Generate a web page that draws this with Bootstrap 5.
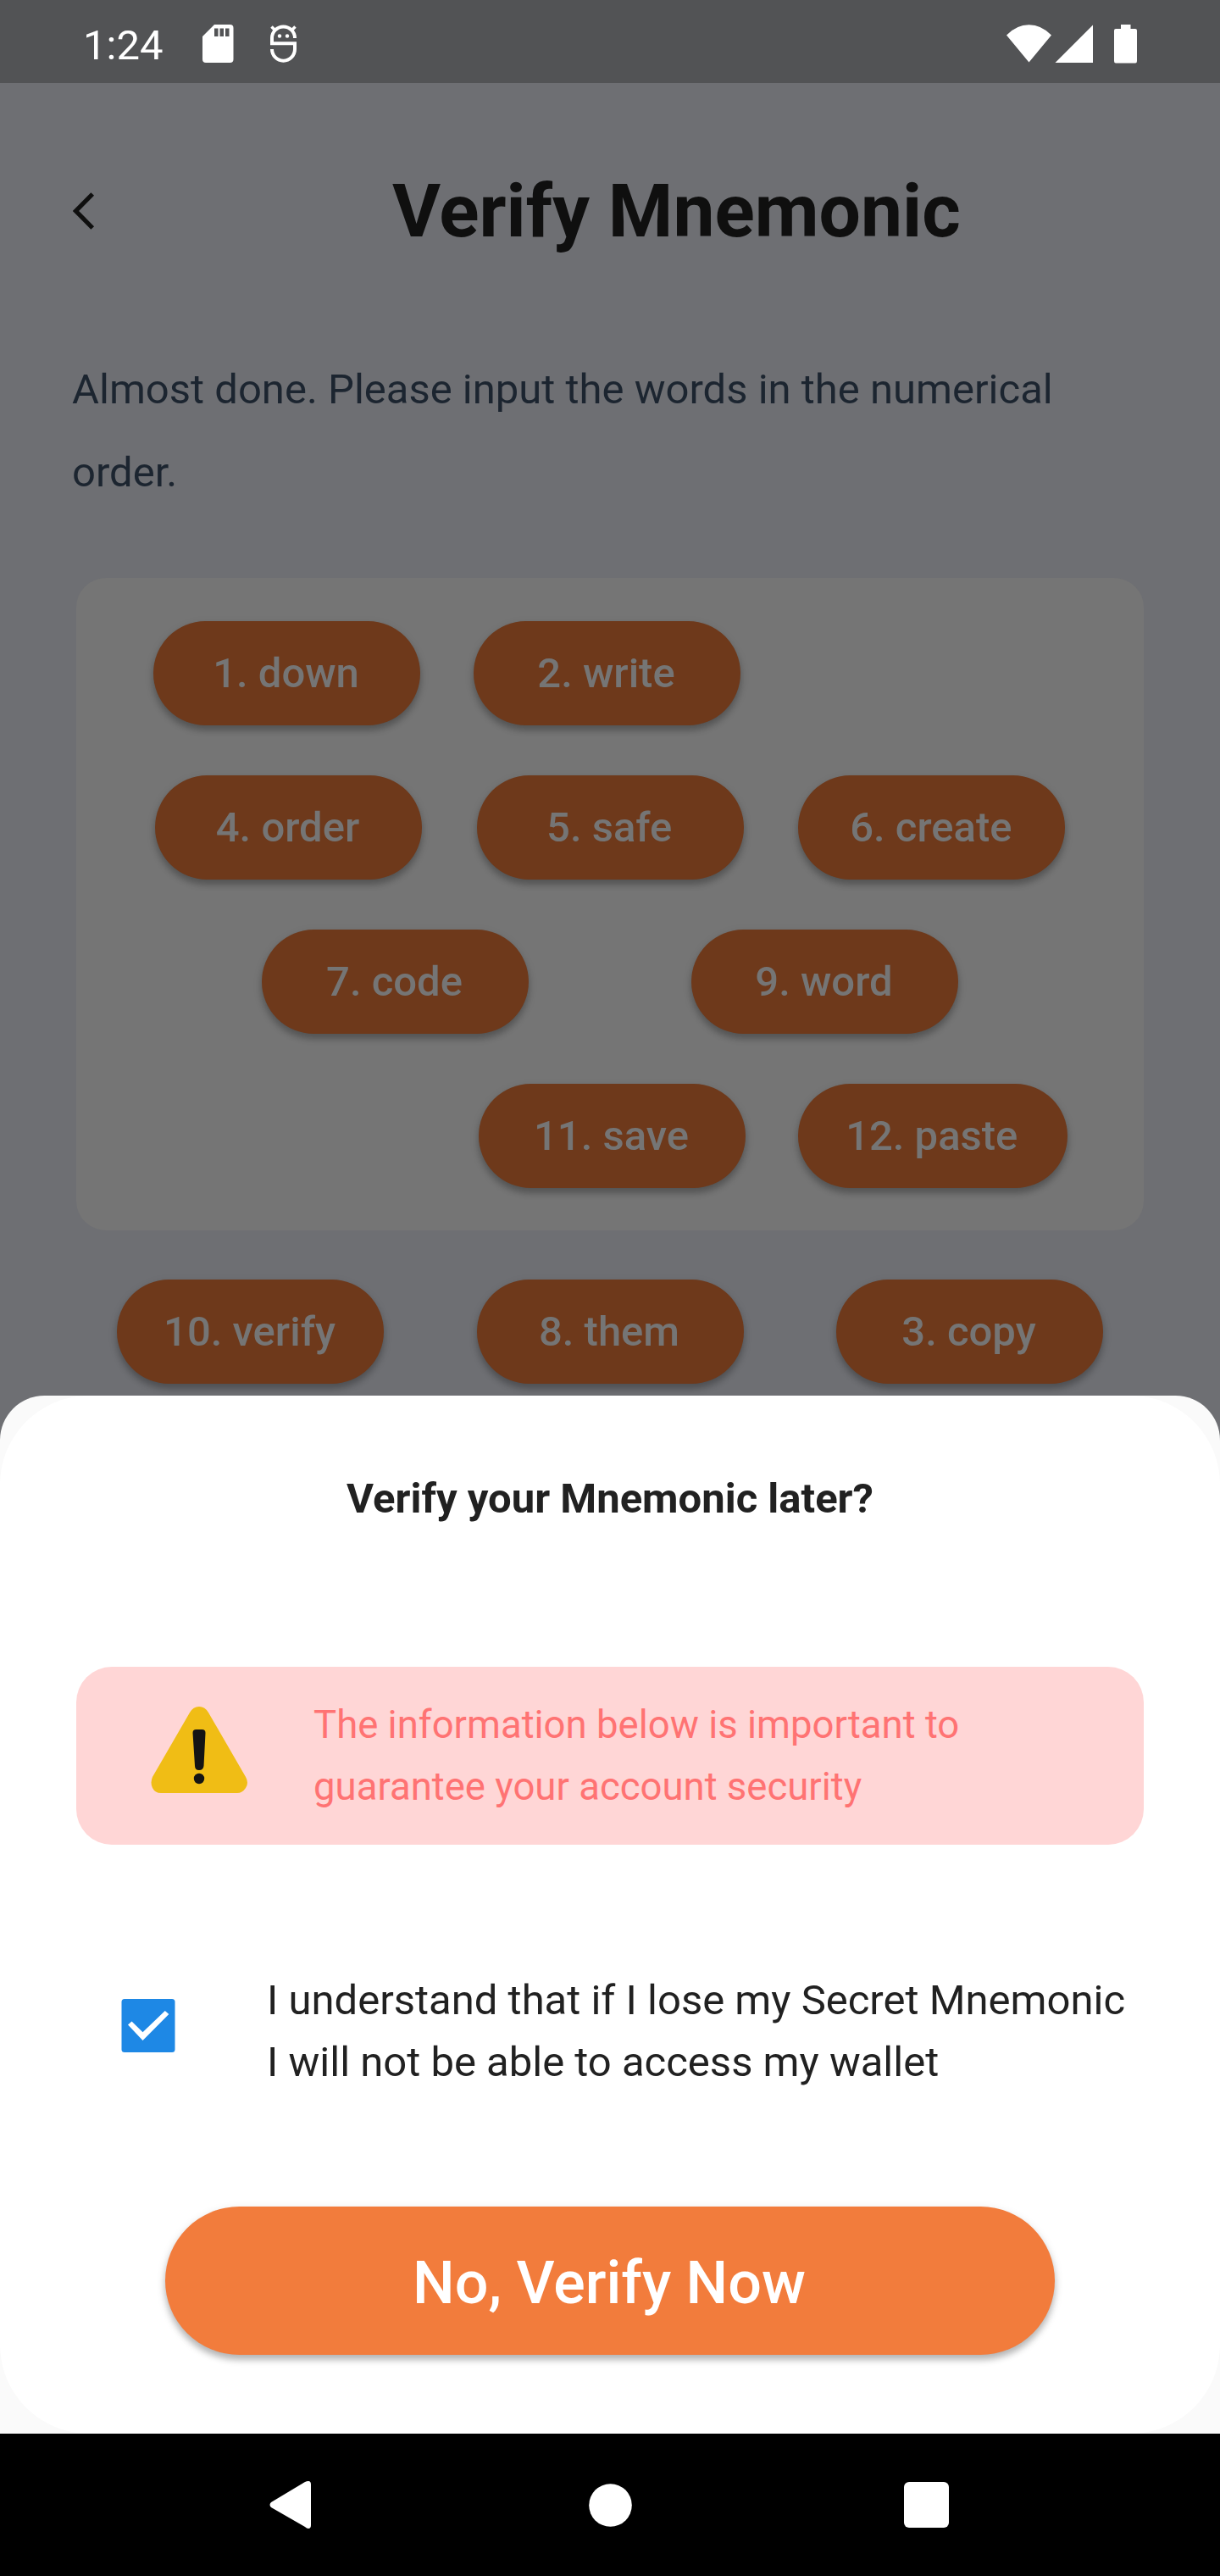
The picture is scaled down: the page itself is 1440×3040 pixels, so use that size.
<!DOCTYPE html>
<html lang="en">
<head>
<meta charset="utf-8">
<meta name="viewport" content="width=device-width, initial-scale=1">
<title>Verify Mnemonic</title>
<link href="https://cdn.jsdelivr.net/npm/bootstrap@5.3.0/dist/css/bootstrap.min.css" rel="stylesheet">
<style>
body{font-family:Roboto,sans-serif;font-size:49px;background:#6e6f73;color:#212121;width:1440px;height:3040px;overflow:hidden}
svg{display:block;flex:none}
.status{height:98px;background:#525355;color:#fff;padding:5px 98px 0 98px}
.status-time{line-height:93px;padding-top:4px;width:141px}
.mascot{margin-left:42px}
.app-main{height:1549px;color:#0f0f0f}
.app-header{height:301px;padding-left:86px}
.app-title{font-size:87.5px;font-weight:700;line-height:100px;padding-left:350px}
.intro{line-height:98px;color:#1c2530;margin:12px 85px 0;white-space:nowrap}
.word-panel{margin:75px 90px 0;width:1260px;height:770px;border-radius:35px;background:#757575;padding-top:51px;gap:59.5px}
.pill{width:315px;height:122.5px;border-radius:62px;background:#6e391b;color:#757575;font-weight:500;line-height:124.5px;text-align:center;text-indent:-2px;box-shadow:0 6px 7px rgba(0,0,0,.2),0 4px 12px rgba(0,0,0,.12);flex:none}
.pill-wide{width:317.5px}
.r1{padding-left:91px;gap:63px}.r2{padding-left:93px;gap:64.7px}.r3{padding-left:219px;gap:192px}.r4{padding-left:475px;gap:62px}
.spare{padding:58px 138px 0;gap:109.5px}
.sheet{height:1225px;background:#fafafa;border-radius:52.5px 52.5px 0 0;overflow:hidden;flex:none}
.sheet-body{height:1225px;background:#fff;border-radius:105px;padding-top:85px}
.sheet-title{font-weight:700;line-height:74px}
.warn{margin:161px 90px 0;width:1260px;height:210px;border-radius:42px;background:#ffd6d6;color:#ff7373;font-size:45.5px;line-height:73.5px;padding-left:88px;gap:78px}
.warn svg{margin-top:-14px}
.agree{margin-top:147px;padding-left:143px;gap:108px;line-height:73px}
.agree svg{margin-top:-13px}
.cta{width:1050px;height:175px;border-radius:88px;background:#f27c3c;font-size:70px;font-weight:500;line-height:180px;text-indent:-2px;margin:134px auto 0;box-shadow:0 6px 7px rgba(0,0,0,.2),0 4px 12px rgba(0,0,0,.14)}
.sysnav{height:168px;background:#000;padding:0 320px 0 318px}
.nav-home{margin-left:6px}
</style>
</head>
<body class="d-flex flex-column">
<div class="status d-flex align-items-center flex-shrink-0">
  <div class="status-time">1:24</div>
  <svg width="37" height="45" viewBox="0 0 37 45" fill="#fff"><path fill-rule="evenodd" d="M14 0H32.500Q36.500 0 36.500 4V41Q36.500 45 32.500 45H4Q0 45 0 41V14ZM14 4.500V14H18.500V4.500ZM20.500 4.500V14H25V4.500ZM27 4.500V14H31.500V4.500Z"/></svg>
  <svg class="mascot" width="32" height="46" viewBox="318 29 32 46" fill="none" stroke="#fff" stroke-width="4"><path d="M348 45A13.500 13.500 0 0 0 321 45V51.300H348V58A13.500 13.700 0 0 1 321 58"/><path stroke-width="3.500" d="M320.500 31.500L325 36M348.500 31.500L344 36"/><g fill="#fff" stroke="none"><circle cx="330" cy="42.500" r="2.200"/><circle cx="339" cy="42.500" r="2.200"/></g></svg>
  <svg class="ms-auto" width="154" height="46" viewBox="1188 28 154 46" fill="#fff"><path d="M1188 40.500Q1200 28.300 1214.500 28.300T1241 40.500L1214.500 72.500ZM1245.500 73L1290 28.500V73ZM1323 33V28H1334.500V33H1340Q1342 33 1342 35V71Q1342 73.500 1340 73.500H1317Q1315 73.500 1315 71V35Q1315 33 1317 33Z"/></svg>
</div>
<main class="app-main">
  <header class="app-header d-flex align-items-center">
    <svg width="27" height="44" viewBox="0 0 27 44" fill="none" stroke="#0f0f0f" stroke-width="5.200"><path d="M23.200 2L3.500 22L23.200 42"/></svg>
    <h1 class="app-title mb-0">Verify Mnemonic</h1>
  </header>
  <p class="intro">Almost done. Please input the words in the numerical<br>order.</p>
  <section class="word-panel d-flex flex-column">
    <div class="d-flex r1"><div class="pill">1. down</div><div class="pill">2. write</div></div>
    <div class="d-flex r2"><div class="pill">4. order</div><div class="pill">5. safe</div><div class="pill">6. create</div></div>
    <div class="d-flex r3"><div class="pill">7. code</div><div class="pill">9. word</div></div>
    <div class="d-flex r4"><div class="pill">11. save</div><div class="pill pill-wide">12. paste</div></div>
  </section>
  <div class="spare d-flex"><div class="pill">10. verify</div><div class="pill">8. them</div><div class="pill">3. copy</div></div>
</main>
<section class="sheet position-relative">
  <div class="sheet-body">
    <div class="sheet-title text-center">Verify your Mnemonic later?</div>
    <div class="warn d-flex align-items-center">
      <svg width="114" height="102" viewBox="0 0 114 102"><path fill="#f0bd15" d="M46 7Q50 0 57 0T68 7L112 83Q116 90 112 96T102 102H12Q5 102 2 96T2 83Z"/><path fill="#141414" d="M49.500 31Q49.500 27 53.500 27H60.500Q64.500 27 64.500 31L62.500 70Q62 75 57 75T52 70Z"/><circle cx="57" cy="85" r="6.200" fill="#141414"/></svg>
      <div>The information below is important to<br>guarantee your account security</div>
    </div>
    <div class="agree d-flex align-items-center">
      <svg width="64" height="64" viewBox="143 2359 64 64"><rect x="143.500" y="2359" width="63" height="63" rx="3.500" fill="#1e88e5"/><path fill="#fff" d="M151 2389.600L155.500 2385.400L168.500 2398.200L194.800 2372.900L199.300 2377.100L168.500 2407.900Z"/></svg>
      <div class="text-nowrap">I understand that if I lose my Secret Mnemonic<br>I will not be able to access my wallet</div>
    </div>
    <div class="cta text-white text-center">No, Verify Now</div>
  </div>
</section>
<nav class="sysnav d-flex align-items-center justify-content-between">
  <svg width="49" height="56" viewBox="0 0 49 56" fill="#fff"><path d="M42 1Q44 0 46 0Q49 0 49 4V52Q49 56 46 56Q44 56 42 54L2 31Q-1 28 2 25Z"/></svg>
  <svg class="nav-home" width="51" height="51" viewBox="0 0 51 51" fill="#fff"><circle cx="25.500" cy="25.500" r="25.300"/></svg>
  <svg width="53" height="54" viewBox="0 0 53 54" fill="#fff"><rect width="53" height="54" rx="6"/></svg>
</nav>
<script src="https://cdn.jsdelivr.net/npm/bootstrap@5.3.0/dist/js/bootstrap.bundle.min.js"></script>
</body>
</html>
